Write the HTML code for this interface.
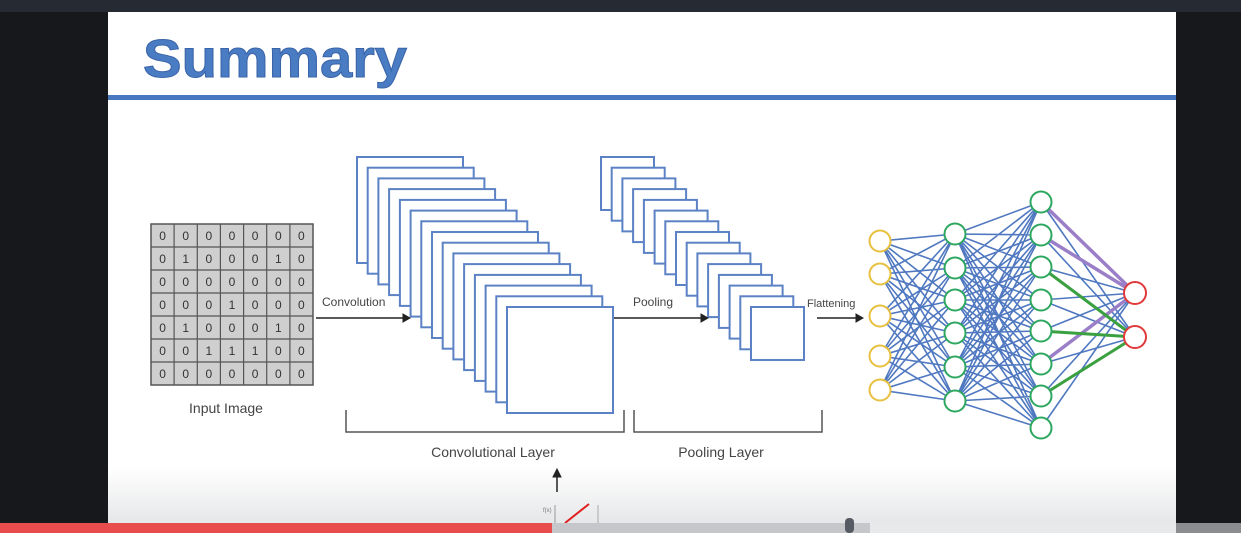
<!DOCTYPE html>
<html><head><style>
body{margin:0;width:1241px;height:533px;background:#16181c;overflow:hidden;position:relative;font-family:"Liberation Sans",sans-serif}
#top{position:absolute;left:0;top:0;width:1241px;height:12px;background:#252a33}
#slide{position:absolute;left:108px;top:12px;width:1068px;height:511px;background:linear-gradient(#fff 0,#fff 455px,#e6e7e9 511px)}
</style></head><body>
<div id="top"></div>
<div id="slide"></div>
<svg width="1241" height="533" style="position:absolute;left:0;top:0" font-family="Liberation Sans, sans-serif">
<text x="143" y="77" font-size="54" font-weight="bold" fill="#4a7cc4" stroke="#3a64a8" stroke-width="1" textLength="264" lengthAdjust="spacingAndGlyphs">Summary</text>
<rect x="108" y="95" width="1068" height="5" fill="#4a78c0"/>

<rect x="151" y="224" width="162" height="161" fill="#cfcfcf" stroke="#555" stroke-width="1.5"/>
<path d="M174.1 224V385M197.3 224V385M220.4 224V385M243.6 224V385M266.7 224V385M289.9 224V385M151 247H313M151 270H313M151 293H313M151 316H313M151 339H313M151 362H313" stroke="#555" stroke-width="1.2"/>
<g font-size="12" fill="#333" text-anchor="middle">
<text x="162.6 185.7 208.9 232 255.1 278.3 301.4" y="240">0000000</text>
<text x="162.6 185.7 208.9 232 255.1 278.3 301.4" y="263">0100010</text>
<text x="162.6 185.7 208.9 232 255.1 278.3 301.4" y="286">0000000</text>
<text x="162.6 185.7 208.9 232 255.1 278.3 301.4" y="309">0001000</text>
<text x="162.6 185.7 208.9 232 255.1 278.3 301.4" y="332">0100010</text>
<text x="162.6 185.7 208.9 232 255.1 278.3 301.4" y="355">0011100</text>
<text x="162.6 185.7 208.9 232 255.1 278.3 301.4" y="378">0000000</text>
</g>

<g fill="#fff" stroke="#5b82c4" stroke-width="2">
<rect x="357" y="157" width="106" height="106"/>
<rect x="367.7" y="167.7" width="106" height="106"/>
<rect x="378.4" y="178.4" width="106" height="106"/>
<rect x="389.1" y="189.1" width="106" height="106"/>
<rect x="399.9" y="199.9" width="106" height="106"/>
<rect x="410.6" y="210.6" width="106" height="106"/>
<rect x="421.3" y="221.3" width="106" height="106"/>
<rect x="432" y="232" width="106" height="106"/>
<rect x="442.7" y="242.7" width="106" height="106"/>
<rect x="453.4" y="253.4" width="106" height="106"/>
<rect x="464.1" y="264.1" width="106" height="106"/>
<rect x="474.9" y="274.9" width="106" height="106"/>
<rect x="485.6" y="285.6" width="106" height="106"/>
<rect x="496.3" y="296.3" width="106" height="106"/>
<rect x="507" y="307" width="106" height="106"/>

<rect x="601" y="157" width="53" height="53"/>
<rect x="611.7" y="167.7" width="53" height="53"/>
<rect x="622.4" y="178.4" width="53" height="53"/>
<rect x="633.1" y="189.1" width="53" height="53"/>
<rect x="643.9" y="199.9" width="53" height="53"/>
<rect x="654.6" y="210.6" width="53" height="53"/>
<rect x="665.3" y="221.3" width="53" height="53"/>
<rect x="676" y="232" width="53" height="53"/>
<rect x="686.7" y="242.7" width="53" height="53"/>
<rect x="697.4" y="253.4" width="53" height="53"/>
<rect x="708.1" y="264.1" width="53" height="53"/>
<rect x="718.9" y="274.9" width="53" height="53"/>
<rect x="729.6" y="285.6" width="53" height="53"/>
<rect x="740.3" y="296.3" width="53" height="53"/>
<rect x="751" y="307" width="53" height="53"/>
</g>

<g stroke="#4f78c0" stroke-width="1.6" fill="none">
<path d="M880 241L955 234M880 241L955 268M880 241L955 300M880 241L955 333M880 241L955 367M880 241L955 401
M880 274L955 234M880 274L955 268M880 274L955 300M880 274L955 333M880 274L955 367M880 274L955 401
M880 316L955 234M880 316L955 268M880 316L955 300M880 316L955 333M880 316L955 367M880 316L955 401
M880 356L955 234M880 356L955 268M880 356L955 300M880 356L955 333M880 356L955 367M880 356L955 401
M880 390L955 234M880 390L955 268M880 390L955 300M880 390L955 333M880 390L955 367M880 390L955 401"/>
<path d="M955 234L1041 202M955 234L1041 235M955 234L1041 267M955 234L1041 300M955 234L1041 331M955 234L1041 364M955 234L1041 396M955 234L1041 428
M955 268L1041 202M955 268L1041 235M955 268L1041 267M955 268L1041 300M955 268L1041 331M955 268L1041 364M955 268L1041 396M955 268L1041 428
M955 300L1041 202M955 300L1041 235M955 300L1041 267M955 300L1041 300M955 300L1041 331M955 300L1041 364M955 300L1041 396M955 300L1041 428
M955 333L1041 202M955 333L1041 235M955 333L1041 267M955 333L1041 300M955 333L1041 331M955 333L1041 364M955 333L1041 396M955 333L1041 428
M955 367L1041 202M955 367L1041 235M955 367L1041 267M955 367L1041 300M955 367L1041 331M955 367L1041 364M955 367L1041 396M955 367L1041 428
M955 401L1041 202M955 401L1041 235M955 401L1041 267M955 401L1041 300M955 401L1041 331M955 401L1041 364M955 401L1041 396M955 401L1041 428"/>
<path d="M1041 202L1135 337M1041 235L1135 337M1041 267L1135 293M1041 300L1135 293M1041 300L1135 337M1041 331L1135 293M1041 364L1135 337M1041 396L1135 293M1041 428L1135 293"/>
<path d="M1041 202L1135 293M1041 235L1135 293M1041 364L1135 293" stroke="#9a7fc8" stroke-width="3.5"/>
<path d="M1041 267L1135 337M1041 331L1135 337M1041 396L1135 337" stroke="#3aa040" stroke-width="3"/>
</g>
<g fill="#fff" stroke-width="2">
<g stroke="#e8c040"><circle cx="880" cy="241" r="10.5"/><circle cx="880" cy="274" r="10.5"/><circle cx="880" cy="316" r="10.5"/><circle cx="880" cy="356" r="10.5"/><circle cx="880" cy="390" r="10.5"/></g>
<g stroke="#2ea860"><circle cx="955" cy="234" r="10.5"/><circle cx="955" cy="268" r="10.5"/><circle cx="955" cy="300" r="10.5"/><circle cx="955" cy="333" r="10.5"/><circle cx="955" cy="367" r="10.5"/><circle cx="955" cy="401" r="10.5"/>
<circle cx="1041" cy="202" r="10.5"/><circle cx="1041" cy="235" r="10.5"/><circle cx="1041" cy="267" r="10.5"/><circle cx="1041" cy="300" r="10.5"/><circle cx="1041" cy="331" r="10.5"/><circle cx="1041" cy="364" r="10.5"/><circle cx="1041" cy="396" r="10.5"/><circle cx="1041" cy="428" r="10.5"/></g>
<g stroke="#e03a3a"><circle cx="1135" cy="293" r="11"/><circle cx="1135" cy="337" r="11"/></g>
</g>

<text x="226" y="413" font-size="14" text-anchor="middle" fill="#444">Input Image</text>
<g fill="#222" stroke="#222">
<line x1="316" y1="318" x2="403" y2="318" stroke-width="1.5"/><path d="M403 314 L410 318 L403 322Z"/>
<line x1="614" y1="318" x2="701" y2="318" stroke-width="1.5"/><path d="M701 314 L708 318 L701 322Z"/>
<line x1="817" y1="318" x2="856" y2="318" stroke-width="1.5"/><path d="M856 314 L863 318 L856 322Z"/>
<line x1="557" y1="492" x2="557" y2="476" stroke-width="1.5"/><path d="M553 477 L557 469 L561 477Z"/>
</g>
<text x="322" y="306" font-size="12" fill="#444">Convolution</text>
<text x="633" y="306" font-size="12" fill="#444">Pooling</text>
<text x="807" y="307" font-size="11" fill="#444">Flattening</text>
<path d="M346 410 V432 H624 V410 M634 410 V432 H822 V410" fill="none" stroke="#555" stroke-width="1.5"/>
<text x="493" y="457" font-size="14" text-anchor="middle" fill="#444">Convolutional Layer</text>
<text x="721" y="457" font-size="14" text-anchor="middle" fill="#444">Pooling Layer</text>
<text x="543" y="512" font-size="6" fill="#777">f(x)</text>
<line x1="555" y1="505" x2="555" y2="523" stroke="#999"/>
<line x1="598" y1="505" x2="598" y2="523" stroke="#aaa"/>
<line x1="565" y1="523" x2="589" y2="504" stroke="#e02020" stroke-width="2"/>
<rect x="0" y="523" width="552" height="10" fill="#e84c4c"/>
<rect x="552" y="523" width="318" height="10" fill="#c5c7ca"/>
<rect x="870" y="523" width="306" height="10" fill="#e8e9eb"/>
<rect x="1176" y="523" width="65" height="10" fill="#8a8c8f"/>
<rect x="845" y="518" width="9" height="15" rx="4" fill="#555a63"/>
</svg>
</body></html>
